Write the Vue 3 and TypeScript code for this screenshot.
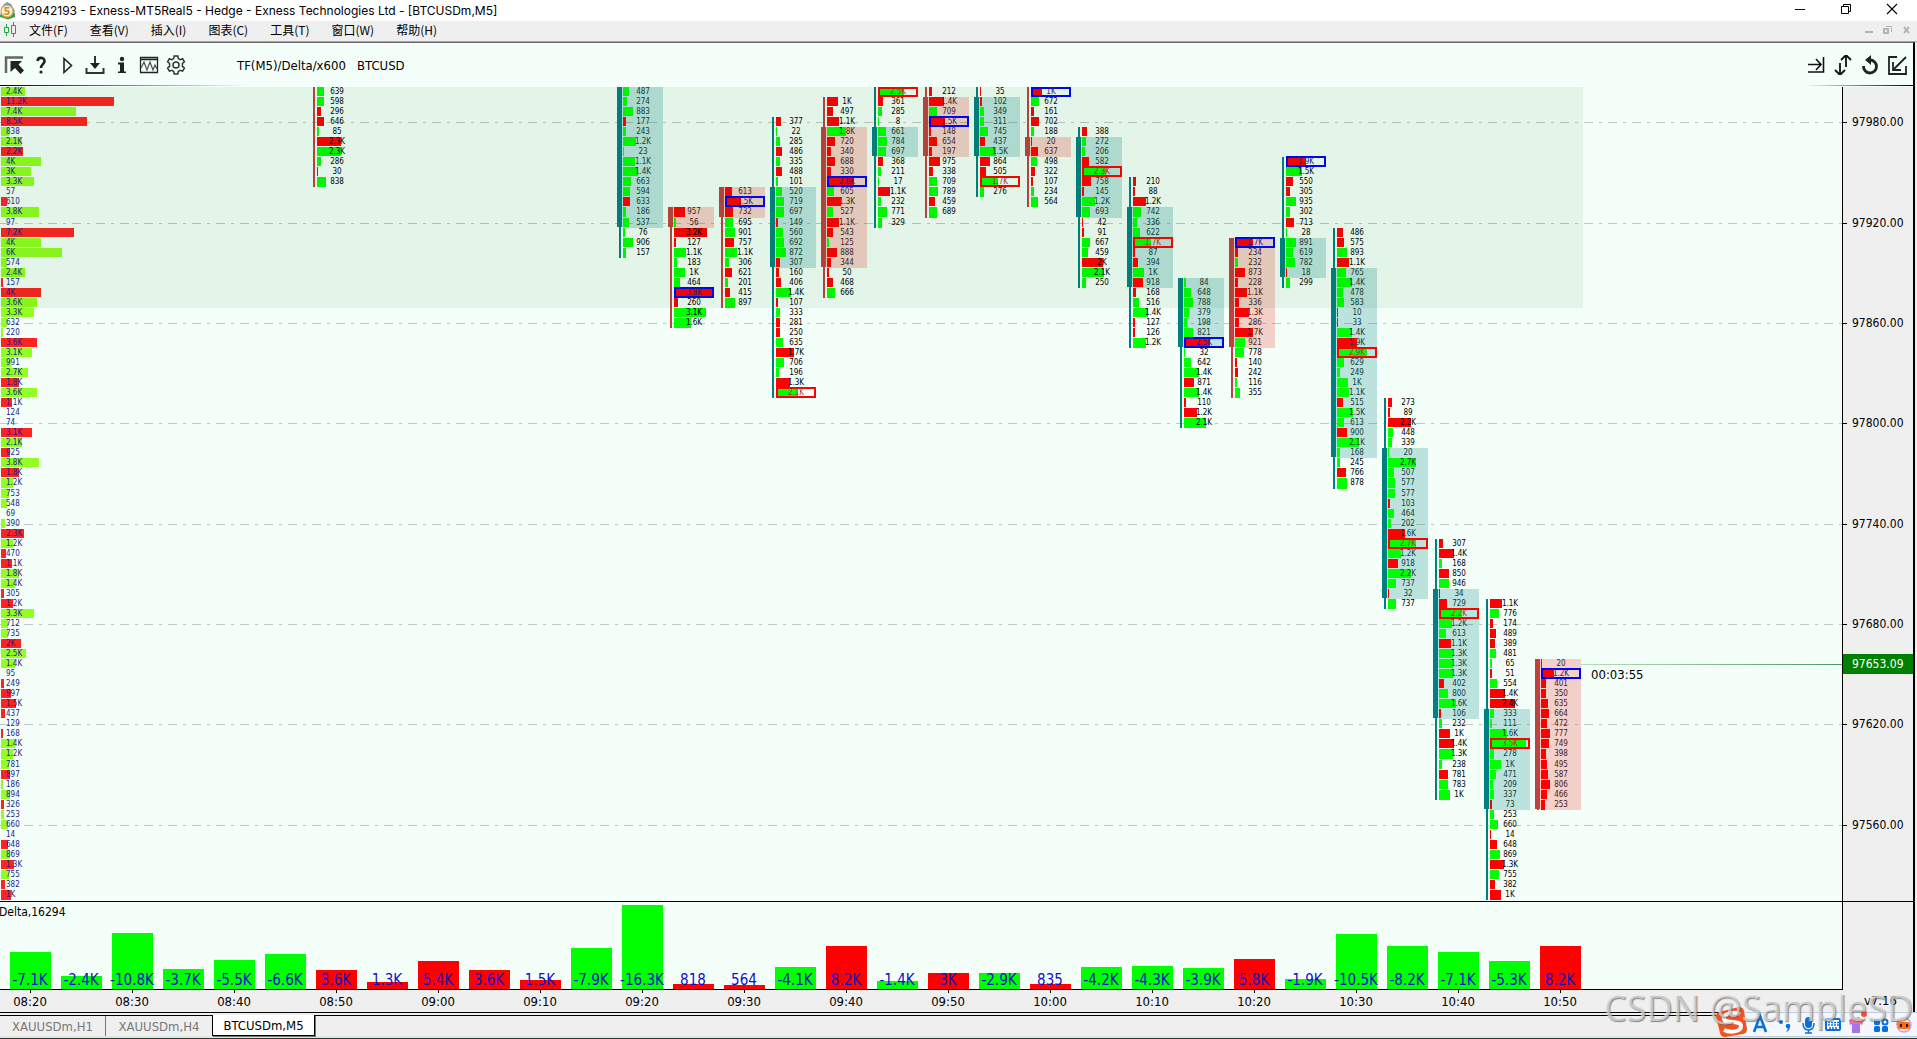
<script setup lang="ts">
interface Cell { label: string; size: number; up: boolean; marked: boolean; row: number }
interface Column { slot: number; start: number; body: [number, number] | null; tone: 'teal' | 'brown'; cells: Cell[] }

const rowTop = (i: number): number => 10 * i + Math.floor((i + 14) / 27)

const toSize = (label: string): number => {
  const n = parseFloat(label)
  return label.endsWith('K') ? n * 1000 : n
}

// Cell notation: g/r = side, then the label, "!" = marked cell
const parseCells = (source: string, start: number): Cell[] =>
  source.split(' ').map((token, i) => {
    const marked = token.endsWith('!')
    const label = token.slice(1).replace('!', '')
    return { label, size: toSize(label), up: token[0] === 'g', marked, row: start + i }
  })

const column = (slot: number, tone: 'teal' | 'brown', start: number, body: [number, number] | null, source: string): Column =>
  ({ slot, tone, start, body, cells: parseCells(source, start) })

const columns: Column[] = [
  column(6, 'brown', 0, null, 'g639 g598 r296 r646 g85 r2.3K g2.3K g286 r30 g838'),
  column(12, 'teal', 0, [0, 13], 'g487 g274 g883 r177 g243 g1.2K g23 g1.1K g1.4K g663 g594 r633 g186 g537 g76 g906 g157'),
  column(13, 'brown', 12, [12, 13], 'r957 g56 r3.2K r127 g1.1K g183 g1K g464 r3.8K! r260 g3.1K g1.6K'),
  column(14, 'brown', 10, [10, 12], 'r613 r1.5K! r732 g695 g901 r757 g1.1K g306 r621 g201 r415 g897'),
  column(15, 'teal', 3, [10, 17], 'r377 g22 g285 r486 g335 r488 g101 g520 g719 g697 r149 g560 g692 g872 r307 r160 r406 g1.4K r107 g333 r281 r250 g635 r1.7K g706 g196 r1.3K g2.1K!'),
  column(16, 'brown', 1, [4, 17], 'r1K r497 r1.1K g1.8K r720 r340 r688 r330 r2.6K! g605 r1.3K g527 r1.1K r543 g125 r888 r344 r50 r468 g666'),
  column(17, 'teal', 0, [4, 6], 'g2.5K! r361 g285 g8 g661 g784 g697 r368 g211 g17 r1.1K g232 g771 g329'),
  column(18, 'brown', 0, [1, 6], 'r212 r1.4K g709 r1.5K! r148 r654 r197 r975 r338 g709 g789 r459 g689'),
  column(19, 'teal', 0, [1, 6], 'r35 r102 g349 g311 g745 r437 g1.5K r864 r505 g1.7K! g276'),
  column(20, 'brown', 0, [5, 6], 'r1K! g672 r161 r702 g188 r20 r637 g498 r322 r107 g234 g564'),
  column(21, 'teal', 4, [5, 12], 'r388 g272 g206 r582 g2.3K! r758 r145 g1.2K g693 r42 r91 g667 g459 r2K g2.1K g250'),
  column(22, 'teal', 9, [12, 19], 'r210 r88 r1.2K g742 g336 g622 g1.7K! r87 r394 g1K r918 r168 g516 g1.4K r127 r126 g1.2K'),
  column(23, 'teal', 19, [19, 25], 'g84 g648 g788 g379 g198 g821 r2.5K! g32 g642 g1.4K r871 g1.4K r110 r1.2K g2.1K'),
  column(24, 'brown', 15, [15, 25], 'r1.7K! r234 g232 r873 r228 r1.1K r336 r1.3K r286 r1.7K g921 g778 r140 r242 g116 g355'),
  column(25, 'teal', 7, [15, 18], 'r1.9K! g1.5K r550 r305 g935 g302 r713 g28 g891 g619 g782 r18 g299'),
  column(26, 'teal', 14, [18, 36], 'r486 r575 g893 r1.1K g765 g1.4K g478 g583 r10 r33 g1.4K r1.9K g2.9K! g629 g249 g1K g1.1K r515 g1.5K g613 r900 g2.1K g168 g245 r766 g878'),
  column(27, 'teal', 31, [36, 50], 'r273 r89 r2.2K g448 g339 g20 g2.7K g507 g577 g577 r103 g464 g202 r1.6K g2.7K! g1.2K r918 g2.2K g737 r32 g737'),
  column(28, 'teal', 45, [50, 62], 'r307 r1.4K g168 r850 g946 r34 r729 g2.2K! g1.2K g613 r1.1K g1.3K g1.3K g1.3K r402 g800 g1.6K r106 g232 r1K r1.4K g1.3K g238 r781 g783 g1K'),
  column(29, 'teal', 51, [62, 71], 'r1.1K g776 r174 r489 r389 g481 g65 r51 g554 r1.4K r2.4K g333 g111 g1.6K g3.5K! g278 g1K g471 g209 g337 r73 g253 g660 r14 r648 g869 r1.3K g755 r382 r1K'),
  column(30, 'brown', 57, [57, 71], 'r20 r1.2K! r401 r350 r635 r664 r472 r777 r749 r398 r495 r587 r806 r466 r253'),
]

const profile: Cell[] = parseCells(
  'g2.4K r11.2K g7.4K r8.5K g838 g2.1K r2.2K g4K g3K g3.3K g57 r610 g3.8K g97 r7.2K g4K g6K g574 g2.4K r157 r4K g3.6K g3.3K g632 g220 r3.6K g3.1K g991 g2.7K r1.8K g3.6K r1.1K g124 g74 r3.1K g2.1K r925 g3.8K r1.8K g1.2K g753 g548 g69 g390 r2.3K g1.2K r470 r1.1K g1.8K g1.4K r305 r1.2K g3.3K g712 g735 r2K g2.5K g1.4K g95 r249 r997 r1.5K r437 g129 r168 g1.4K g1.2K g781 r897 g186 g894 r326 g253 g660 g14 r648 g869 r1.3K g755 r382 r1K',
  0,
)

const plotHeight = rowTop(profile.length) + 1
const center = (slot: number): number => 30 + slot * 51
const colTop = (c: Column): number => rowTop(c.start)
const colBottom = (c: Column): number => rowTop(c.start + c.cells.length)
const barHeight = (row: number, last: boolean): number => rowTop(row + 1) - rowTop(row) - (last ? 0 : 1)
const barWidth = (size: number): number => Math.round(size / 100 + 1)
const profileWidth = (size: number): number => (size < 150 ? 0 : Math.round(size / 99))
const inBody = (c: Column, row: number): boolean => !!c.body && row >= c.body[0] && row <= c.body[1]
const cellClass = (c: Column, cell: Cell): string => {
  if (cell.marked) return cell.up ? 'cell mark-red' : 'cell mark-blue'
  return inBody(c, cell.row) ? `cell in-${c.tone}` : 'cell'
}

const levels = [
  { price: '97980.00', y: 35 }, { price: '97920.00', y: 136 }, { price: '97860.00', y: 236 },
  { price: '97800.00', y: 336 }, { price: '97740.00', y: 437 }, { price: '97680.00', y: 537 },
  { price: '97620.00', y: 637 }, { price: '97560.00', y: 738 },
]
const lastY = 577

const deltas: [string, number][] = [
  ['-7.1K', 37], ['-2.4K', 13], ['-10.8K', 56], ['-3.7K', 20], ['-5.5K', 29], ['-6.6K', 35], ['3.6K', 19], ['1.3K', 7],
  ['5.4K', 28], ['3.6K', 19], ['1.5K', 9], ['-7.9K', 41], ['-16.3K', 84], ['818', 5], ['564', 4], ['-4.1K', 22],
  ['8.2K', 43], ['-1.4K', 8], ['3K', 16], ['-2.9K', 16], ['835', 5], ['-4.2K', 22], ['-4.3K', 23], ['-3.9K', 21],
  ['5.8K', 30], ['-1.9K', 10], ['-10.5K', 55], ['-8.2K', 43], ['-7.1K', 37], ['-5.3K', 28], ['8.2K', 43],
]
const times = Array.from({ length: 16 }, (_, i) => {
  const m = 500 + i * 10
  return `${String(Math.floor(m / 60)).padStart(2, '0')}:${String(m % 60).padStart(2, '0')}`
})

const menus = ['文件(F)', '查看(V)', '插入(I)', '图表(C)', '工具(T)', '窗口(W)', '帮助(H)']
</script>

<template>
  <div class="app">
    <header class="titlebar">
      <svg class="logo" width="16" height="18" viewBox="0 0 16 18">
        <path d="M0 14 L3 3 L7 0 L11 2 L15 9 L13 13 Z" fill="#5b9cc4" />
        <path d="M0 13 L0 15 L8 17.500 L15 15 L15 11 Z" fill="#3f9a4c" />
        <circle cx="7" cy="9" r="6" fill="#fbf4dc" stroke="#d3ab4a" stroke-width="1.300" />
        <text x="7" y="13" text-anchor="middle" font-size="11" font-weight="700" fill="#c8902a">5</text>
      </svg>
      <h1>59942193 - Exness-MT5Real5 - Hedge - Exness Technologies Ltd - [BTCUSDm,M5]</h1>
      <div class="window-buttons">
        <button aria-label="Minimize"><svg width="12" height="12"><path d="M1 6.500h10" stroke="#000" /></svg></button>
        <button aria-label="Restore"><svg width="12" height="12" fill="none" stroke="#000"><path d="M1.500 3.500h7v7h-7zM3.500 3V1.500h7v7H9" /></svg></button>
        <button aria-label="Close"><svg width="12" height="12"><path d="M1 1l10 10M11 1L1 11" stroke="#000" stroke-width="1.100" /></svg></button>
      </div>
    </header>

    <nav class="menubar">
      <svg class="candles" width="14" height="16" fill="none" stroke="#1fa53c"><path d="M3.500 2v3M3.500 11v3M1.500 5.500h4v5h-4zM10.500 0v3M10.500 12v3M8.500 3.500h4v8h-4z" /></svg>
      <button v-for="m in menus" :key="m">{{ m }}</button>
      <div class="mdi-buttons">
        <button aria-label="Minimize chart"><svg width="9" height="10"><path d="M1 7h8" stroke="#b5b5b5" stroke-width="2" /></svg></button>
        <button aria-label="Restore chart"><svg width="9" height="10" fill="none" stroke="#b5b5b5"><path d="M3 1.500h5.500V7" /><path d="M1 4h4v4H1z" stroke-width="2" /></svg></button>
        <button aria-label="Close chart"><svg width="9" height="10"><path d="M2 2l5 6M7 2L2 8" stroke="#b5b5b5" stroke-width="2" /></svg></button>
      </div>
    </nav>

    <div class="frame">
      <div class="toolbar">
        <div class="tools">
          <button aria-label="Pointer"><svg width="20" height="20"><path d="M2 18V2.500H19" fill="none" stroke="#666" stroke-width="2.500" /><path d="M6.500 6H18l-3.500 3.500L20 15.500 16.500 19l-5.500-6-4.500 4z" fill="#222" /></svg></button>
          <button aria-label="Help"><svg width="20" height="20"><path d="M6.500 6C7 1.500 14 2 13.500 6.500 13.200 9 10 9.500 10 13" fill="none" stroke="#222" stroke-width="2.600" /><circle cx="10" cy="17" r="1.600" fill="#222" /></svg></button>
          <button aria-label="Play"><svg width="20" height="20"><path d="M6 3.500v14L13.500 10.500z" fill="none" stroke="#222" stroke-width="1.600" /></svg></button>
          <button aria-label="Download"><svg width="20" height="20" fill="none" stroke="#333" stroke-width="2"><path d="M10 1v10M1.500 13v5h17v-5" /><path d="M5 8h10l-5 6z" fill="#222" stroke="none" /></svg></button>
          <button aria-label="Info"><svg width="20" height="20" fill="#222"><circle cx="10" cy="4" r="2.200" /><path d="M6 7.500h6v9h2V18H6v-1.500h2v-7H6z" /></svg></button>
          <button aria-label="Indicators"><svg width="20" height="20" fill="none" stroke="#222" stroke-width="1.300"><path d="M1.500 2.500h17v15h-17zM1.500 4.500h17" /><path d="M2 13l3-6 3 8 3-8 3 8 2-5 2 4" stroke="#555" /></svg></button>
          <button aria-label="Settings"><svg width="20" height="20" fill="none" stroke="#333" stroke-width="1.500"><path d="M8.200 1h3.600l.5 2.600 1.800 1 2.500-.9 1.800 3.100-2 1.700v2.900l2 1.800-1.800 3-2.500-.8-1.800 1-.5 2.600H8.200l-.5-2.600-1.800-1-2.500.8-1.800-3 2-1.800V8.500l-2-1.700 1.800-3.100 2.500.9 1.800-1z" /><circle cx="10" cy="10" r="3" /></svg></button>
        </div>
        <span class="caption">TF(M5)/Delta/x600</span>
        <span class="symbol">BTCUSD</span>
        <div class="view-tools">
          <button aria-label="Scroll to end"><svg width="20" height="20" fill="none" stroke="#111" stroke-width="1.600"><path d="M2 9.500h12M10 4l5 5.500-5 5.500M17.500 2v15H2" /></svg></button>
          <button aria-label="Auto scale"><svg width="20" height="20" fill="none" stroke="#111" stroke-width="1.800"><path d="M13 12V0M8 5l5-5 5 5M7 8v12M2 15l5 5 5-5" /></svg></button>
          <button aria-label="Reset"><svg width="20" height="20"><path d="M10 5a6.500 6.500 0 1 1-6.500 6" fill="none" stroke="#222" stroke-width="2.800" /><path d="M5 5l6-5v10z" fill="#222" /></svg></button>
          <button aria-label="Collapse"><svg width="20" height="20" fill="none" stroke="#222" stroke-width="1.800"><path d="M10 2H2v17h17v-8" /><path d="M19 2L7 14M6 7v8h8" /></svg></button>
        </div>
      </div>

      <div class="chart-row">
        <svg class="plot" :height="plotHeight">
          <defs>
            <linearGradient id="bid" gradientUnits="userSpaceOnUse" x1="1581" x2="1842" y1="0" y2="0">
              <stop offset="0" stop-color="#b4e0b4" /><stop offset="1" stop-color="#4f9b5c" />
            </linearGradient>
          </defs>
          <line v-for="l in levels" :key="l.price" class="gridline" x1="0" x2="100%" :y1="l.y" :y2="l.y" />
          <rect x="1581" :y="lastY" width="100%" height="1" fill="url(#bid)" />

          <g v-for="c in profile" :key="'p' + c.row">
            <rect :class="c.up ? 'vol-up' : 'vol-down'" x="1" :y="rowTop(c.row)" :width="profileWidth(c.size)" :height="barHeight(c.row, c.row === profile.length - 1)" />
            <text class="vol" x="6" :y="rowTop(c.row) + 7">{{ c.label }}</text>
          </g>

          <g v-for="c in columns" :key="c.slot">
            <rect :class="c.tone" :x="center(c.slot) - 23" :y="colTop(c)" width="2" :height="colBottom(c) - colTop(c)" />
            <template v-if="c.body">
              <rect :class="c.tone" :x="center(c.slot) - 25" :y="rowTop(c.body[0])" width="5" :height="rowTop(c.body[1] + 1) - rowTop(c.body[0]) - 1" />
              <rect :class="'shade-' + c.tone" :x="center(c.slot) - 20" :y="rowTop(c.body[0])" width="41" :height="rowTop(c.body[1] + 1) - rowTop(c.body[0])" />
            </template>
            <rect v-for="(cell, i) in c.cells" :key="'b' + cell.row" :class="cell.up ? 'up' : 'down'" :x="center(c.slot) - 19" :y="rowTop(cell.row)" :width="barWidth(cell.size)" :height="barHeight(cell.row, i === c.cells.length - 1)" />
            <template v-for="cell in c.cells" :key="cell.row">
              <rect v-if="cell.marked" class="marker" :stroke="cell.up ? '#ff0000' : '#0000ff'" :x="center(c.slot) - 18" :y="Math.max(rowTop(cell.row), 1)" width="38" :height="cell.row ? 9 : 8" />
              <text :class="cellClass(c, cell)" :x="center(c.slot) + 1" :y="rowTop(cell.row) + 7">{{ cell.label }}</text>
            </template>
          </g>

          <rect class="zone" x="0" y="0" width="1583" :height="rowTop(22)" />
          <text class="countdown" x="1591" y="592">00:03:55</text>
        </svg>

        <svg class="prices" :height="plotHeight">
          <g v-for="l in levels" :key="l.price">
            <rect x="0" :y="l.y" width="4" height="1" />
            <text x="9" :y="l.y + 4">{{ l.price }}</text>
          </g>
          <rect class="tag" x="0" :y="lastY - 10" width="70" height="20" />
          <text class="tag-text" x="9" :y="lastY + 4">97653.09</text>
        </svg>
      </div>

      <div class="delta-row">
        <svg class="delta" height="87">
          <g v-for="(d, i) in deltas" :key="i">
            <rect :class="d[0][0] === '-' ? 'up' : 'down'" :x="center(i) - 20" :y="87 - d[1]" width="41" :height="d[1]" />
            <text class="delta-value" :x="center(i)" y="83">{{ d[0] }}</text>
          </g>
          <text class="delta-name" x="-1" y="14">Delta,16294</text>
        </svg>
        <div class="delta-scale"></div>
      </div>

      <div class="time-row">
        <svg class="times" height="22">
          <g v-for="(t, i) in times" :key="t">
            <rect :x="center(i * 2)" y="0" width="1" height="3" />
            <text :x="center(i * 2)" y="16">{{ t }}</text>
          </g>
        </svg>
        <span class="version">v7.16</span>
      </div>
    </div>

    <footer class="tabs">
      <button>XAUUSDm,H1</button>
      <button>XAUUSDm,H4</button>
      <button class="active">BTCUSDm,M5</button>
      <div class="ime">
        <svg width="201" height="32" viewBox="0 0 201 32">
          <rect x="14" y="6.500" width="190" height="24" fill="#f4f8fc" stroke="#b9cfe6" />
          <path d="M3 6L23 1q4 0 5 4l3 18q0 4-4 5L9 31q-4 0-5-4L0 10q0-3 3-4z" fill="#f4511e" />
          <path d="M24 8C18 5 7 8 8 13s17 1 17 7-11 7-17 4" fill="none" stroke="#fff" stroke-width="4" />
          <path d="M38 26l6-16 6 16M40 21h8" fill="none" stroke="#0a6fdc" stroke-width="2.600" />
          <g fill="#0a6fdc">
            <circle cx="65" cy="16" r="2" /><circle cx="72" cy="20" r="2.300" /><path d="M74 20q0 5-4 6 2-2 2-5z" />
            <rect x="89" y="11" width="7" height="11" rx="3.500" />
            <rect x="158" y="13" width="6" height="6" rx="1.500" /><rect x="158" y="20" width="6" height="6" rx="1.500" /><rect x="166" y="20" width="6" height="6" rx="1.500" />
          </g>
          <path d="M87 17q0 7 5.500 7T98 17M92.500 24v3M89 27h7" fill="none" stroke="#0a6fdc" stroke-width="1.500" />
          <rect x="110" y="13" width="14" height="11" rx="1" fill="#fff" stroke="#0a6fdc" stroke-width="2" />
          <path d="M112 16.500h11M112 19h11M113 22h8" stroke="#0a6fdc" stroke-width="1.500" stroke-dasharray="2 1" />
          <circle cx="169" cy="16" r="2.500" fill="none" stroke="#0a6fdc" stroke-width="2" />
          <path d="M133 14l5-3q2 3 4 0l6 3-2 5-2-1v9h-8v-9l-2 1z" fill="#a672ee" />
          <path d="M133 14l5-3q2 3 4 0l6 3-2 4h-11z" fill="#f06f90" />
          <circle cx="148" cy="8" r="3" fill="#fa4d32" />
          <circle cx="188" cy="19" r="7" fill="#fff0e8" stroke="#b9a6f0" stroke-width="1.500" />
          <path d="M181 19a7 7 0 0 1 7-7" fill="none" stroke="#f0835b" stroke-width="1.500" />
          <rect x="182" y="16" width="12" height="7" rx="2" fill="#ff6a13" /><path d="M185 18v3M191 18v3" stroke="#222" stroke-width="2" />
        </svg>
      </div>
      <div class="watermark">CSDN @SampleSD</div>
    </footer>
  </div>
</template>

<style>
body { margin: 0; background: #efefef; }
</style>

<style scoped>
.app {
  display: flex;
  flex-direction: column;
  min-height: 100vh;
  overflow: hidden;
  box-sizing: border-box;
  border-bottom: 1px solid #2c3a2c;
  background: #efefef;
  color: #000;
  font: 12px/16px "DejaVu Sans Condensed", "Noto Sans", "Noto Sans CJK SC", sans-serif;
}
button { border: 0; padding: 0; margin: 0; background: none; color: inherit; font: inherit; display: block; }
svg { display: block; }
text { font-family: "DejaVu Sans Condensed", "Noto Sans", sans-serif; }

.titlebar { display: flex; align-items: center; height: 21px; background: #fff; }
.logo { flex: none; }
h1 { margin: 0 0 0 4px; font: 12px/18px Inter, "Noto Sans CJK SC", sans-serif; white-space: nowrap; }
.window-buttons { display: flex; gap: 34px; margin-left: auto; padding: 0 19px 4px 0; }

.menubar { display: flex; align-items: center; height: 18px; padding-bottom: 2px; border-bottom: 1px solid #a8a8a8; font: 12px/18px "Noto Sans CJK SC", sans-serif; }
.menubar > button { padding: 0 11px; }
.candles { margin: 0 0 0 3px; }
.candles + button { margin-left: 1px; }
.mdi-buttons { display: flex; gap: 10px; margin-left: auto; padding-right: 6px; }

.frame { display: flex; flex-direction: column; flex: 1; border-top: 1px solid #696969; border-right: 2px solid #000; margin-right: 2px; }
.toolbar {
  display: flex;
  align-items: center;
  height: 44px;
  background:
    linear-gradient(90deg, #000, transparent) 0 42px / 250px 1px no-repeat,
    linear-gradient(270deg, #000, transparent) 100% 42px / 110px 1px no-repeat,
    #f5fffa;
  font-size: 13px;
  line-height: 20px;
}
.tools { display: flex; gap: 7px; width: 233px; padding-left: 4px; }
.caption { width: 120px; white-space: nowrap; }
.caption, .symbol { padding-top: 2px; }
.view-tools { display: flex; gap: 7px; margin-left: auto; padding-right: 6px; }

.chart-row { display: flex; flex: 1; background: #f5fffa; }
.plot { flex: 1; min-width: 0; border-right: 1px solid #000; }
.prices { flex: none; width: 70px; height: auto; background: #efefef; font-size: 12px; }
.tag { fill: #008000; }
.tag-text { fill: #fff; }
.gridline { stroke: #c3c6c4; stroke-width: 1; stroke-dasharray: 9 6 3 6; shape-rendering: crispEdges; transform: translateY(0.5px); }
.vol-up { fill: #92ff22; }
.vol-down { fill: #ff2222; }
.vol { font-size: 8px; fill: #1c1c8c; }
.teal { fill: #008080; }
.brown { fill: #be4340; }
.shade-teal { fill: rgba(0, 128, 128, 0.23); }
.shade-brown { fill: rgba(238, 50, 45, 0.23); }
.up { fill: #00ff00; }
.down { fill: #ff0000; }
.cell { font-size: 8px; text-anchor: middle; fill: #000; }
.in-teal { fill: #123c38; }
.in-brown { fill: #45201c; }
.mark-red { fill: #a83a20; }
.mark-blue { fill: #2a1a90; }
.marker { fill: none; stroke-width: 2; }
.zone { fill: rgba(0, 100, 0, 0.07); }
.countdown { font-size: 13px; }

.delta-row { display: flex; border-top: 1px solid #000; }
.delta { flex: 1; min-width: 0; background: #f5fffa; border-right: 1px solid #000; border-bottom: 1px solid #000; }
.delta-scale { width: 70px; }
.delta-value { font-size: 15px; text-anchor: middle; fill: #1010c8; }
.delta-name { font-size: 12px; }

.time-row { display: flex; border-bottom: 1px solid #000; }
.times { flex: 1; min-width: 0; font-size: 13px; text-anchor: middle; }
.version { width: 49px; line-height: 22px; font-size: 13px; }

.tabs { position: relative; display: flex; align-items: stretch; height: 20px; margin-top: 2px; border-top: 1px solid #000; border-bottom: 2px solid #dfe5e9; font-size: 13px; }
.tabs > button { width: 106px; box-sizing: border-box; color: #777; line-height: 22px; }
.tabs > button:first-child { border-right: 1px solid #777; }
.tabs > .active { width: 103px; margin-top: -1px; border: 1px solid #000; border-top: 0; background: #fff; color: #000; box-shadow: 1px 1px 0 #777; }
.ime { position: absolute; right: 0; bottom: -2px; }
.watermark {
  position: absolute;
  right: 4px;
  bottom: 6px;
  font: 36px/44px "Noto Sans", sans-serif;
  color: rgba(235, 235, 235, 0.65);
  text-shadow: 1px 1px 1px rgba(90, 90, 90, 0.7);
  white-space: nowrap;
}
</style>
